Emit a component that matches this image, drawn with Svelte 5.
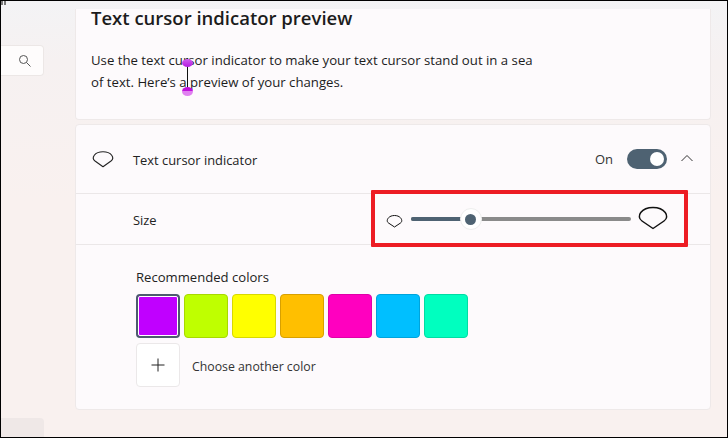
<script>
  const colors = [
    { fill: "#c000ff", edge: "#a800e0" },
    { fill: "#bfff00", edge: "#a8d800" },
    { fill: "#ffff00", edge: "#d8d800" },
    { fill: "#ffbf00", edge: "#d8a000" },
    { fill: "#ff00bf", edge: "#e000a8" },
    { fill: "#00bfff", edge: "#00a4dc" },
    { fill: "#00ffbf", edge: "#00dca4" },
  ];
</script>

<div class="window">
  <div class="grip"><i></i><i></i></div>
  <div class="body">
    <aside class="sidebar">
      <div class="search">
        <svg width="14" height="14" viewBox="0 0 14 14" fill="none" stroke="#555" stroke-width="1">
          <circle cx="5.500" cy="5.500" r="4" />
          <path d="M8.500 8.500l4 4" />
        </svg>
      </div>
      <div class="navitem"></div>
    </aside>

    <main class="content">
      <section class="card preview">
        <h1>Text cursor indicator preview</h1>
        <p>
          Use the text cursor indicator to make your text cursor stand out in a sea<br />
          of text. Here’s a preview of your changes.
        </p>
        <span class="caret">
          <i class="dot top"></i>
          <i class="dot bottom"></i>
        </span>
      </section>

      <section class="card settings">
        <div class="row head">
          <svg class="drop" width="24" height="20" viewBox="0 0 24 20" fill="none" stroke="#222" stroke-width="1.1">
            <path d="M12 17.700 L4 12 C0 9 3.500 2.800 12 2.800 C20.500 2.800 24 9 20 12 Z" stroke-linejoin="round" />
          </svg>
          <span class="label">Text cursor indicator</span>
          <span class="state">On</span>
          <span class="toggle"><i></i></span>
          <svg class="chevron" width="12" height="12" viewBox="0 0 12 12" fill="none" stroke="#333" stroke-width="1">
            <path d="M0.500 9L6 3.500L11.500 9" />
          </svg>
        </div>

        <div class="row size">
          <span class="label">Size</span>
          <div class="slider">
            <svg class="small" width="17" height="14" viewBox="0 0 17 14" fill="none" stroke="#111" stroke-width="1">
              <path d="M8.500 13 L2.500 9 C-0.500 7 2 1.500 8.500 1.500 C15 1.500 17.500 7 14.500 9 Z" stroke-linejoin="round" />
            </svg>
            <div class="track">
              <span class="filled"></span>
              <span class="thumb"><i></i></span>
            </div>
            <svg class="big" width="30" height="24" viewBox="0 0 30 24" fill="none" stroke="#111" stroke-width="1.500">
              <path d="M15 22.500 L4 15 C-2.500 10.500 3.500 1.500 15 1.500 C26.500 1.500 32.500 10.500 26 15 Z" stroke-linejoin="round" />
            </svg>
          </div>
        </div>

        <div class="colors">
          <div class="subtitle">Recommended colors</div>
          <div class="swatches">
            {#each colors as c, i}
              <span class="swatch" class:selected={i === 0} style="background:{c.fill};border-color:{i === 0 ? '#4c5b6e' : c.edge}"></span>
            {/each}
          </div>
          <div class="choose">
            <span class="plus">
              <svg width="14" height="14" viewBox="0 0 14 14" stroke="#222" stroke-width="1">
                <path d="M7 0.500V13.500M0.500 7H13.500" />
              </svg>
            </span>
            <span class="another">Choose another color</span>
          </div>
        </div>
      </section>
    </main>
  </div>

  <div class="highlight"></div>
</div>

<style>
  :global(body) {
    margin: 0;
    background: #000;
  }

  .window {
    position: relative;
    width: 728px;
    height: 438px;
    box-sizing: border-box;
    border: 1px solid #000;
    background: linear-gradient(#f3f3f5, #f6f1f1 60px, #f9f1ef 200px);
    overflow: hidden;
    font-family: "Open Sans", "Noto Sans", sans-serif;
    color: #1c1c1c;
  }

  .grip {
    position: absolute;
    left: 0;
    top: 0;
    display: flex;
    gap: 1px;
  }

  .grip i {
    width: 2px;
    height: 4px;
    background: #777;
  }

  .body {
    display: flex;
    height: 436px;
    padding-top: 8px;
    box-sizing: border-box;
  }

  .sidebar {
    width: 74px;
    flex: none;
    display: flex;
    flex-direction: column;
    padding-top: 36px;
    box-sizing: border-box;
  }

  .search {
    width: 43px;
    height: 31px;
    box-sizing: border-box;
    background: #fefcfc;
    border: 1px solid #ece7e6;
    border-left: none;
    border-radius: 0 4px 4px 0;
    display: flex;
    align-items: center;
    justify-content: flex-end;
    padding-right: 11px;
  }

  .navitem {
    width: 43px;
    height: 19px;
    margin-top: 342px;
    background: #efe8e7;
    border-radius: 0 4px 0 0;
  }

  .content {
    width: 636px;
    flex: none;
    display: flex;
    flex-direction: column;
    gap: 4px;
  }

  .card {
    background: #fdfafc;
    border: 1px solid #eee9e9;
    border-radius: 4px;
    box-sizing: border-box;
  }

  .preview {
    position: relative;
    height: 111px;
    padding: 0 15px;
    border-top: none;
    border-radius: 0 0 4px 4px;
  }

  h1 {
    margin: -1px 0 0;
    font-size: 18.500px;
    font-weight: 600;
    line-height: 20px;
  }

  p {
    margin: 21px 0 0;
    font-size: 13.200px;
    line-height: 22px;
  }

  .caret {
    position: absolute;
    left: 111px;
    top: 57px;
    width: 1px;
    height: 23px;
    background: #111;
  }

  .dot {
    position: absolute;
    left: -5px;
    width: 11px;
    height: 8px;
    border-radius: 50%;
  }

  .dot.top {
    top: -7px;
    background: linear-gradient(#d060ee, #b41ae0);
  }

  .dot.bottom {
    bottom: -7px;
    height: 9px;
    background: linear-gradient(#c010dc 45%, #e080f0 50%);
  }

  .settings {
    height: 286px;
  }

  .row {
    display: flex;
    align-items: center;
    box-sizing: border-box;
    border-bottom: 1px solid #ebe7e8;
  }

  .head {
    height: 69px;
    padding: 0 17px 0 15px;
  }

  .drop {
    margin-right: 18px;
  }

  .label {
    font-size: 12.900px;
    padding-top: 1px;
    color: #222;
  }

  .state {
    margin-left: auto;
    font-size: 13px;
    margin-right: 14px;
    color: #333;
  }

  .toggle {
    width: 40px;
    height: 20px;
    border-radius: 10px;
    background: #4e6272;
    position: relative;
    margin-right: 14px;
  }

  .toggle i {
    position: absolute;
    right: 3px;
    top: 3px;
    width: 14px;
    height: 14px;
    border-radius: 50%;
    background: #fff;
  }

  .chevron {
    margin-top: -2px;
  }

  .size {
    height: 51px;
    padding-left: 57px;
  }

  .slider {
    display: flex;
    align-items: center;
    margin-left: 229px;
    gap: 7px;
  }

  .small {
    margin-top: 3px;
    margin-right: 1px;
  }

  .big {
    margin-top: -2px;
  }

  .track {
    position: relative;
    width: 220px;
    height: 4px;
    border-radius: 2px;
    background: #8a8a8a;
  }

  .filled {
    position: absolute;
    left: 0;
    top: 0;
    height: 4px;
    width: 60px;
    border-radius: 2px;
    background: #4e6272;
  }

  .thumb {
    position: absolute;
    left: 49px;
    top: -9px;
    width: 22px;
    height: 22px;
    border-radius: 50%;
    background: #fff;
    border: 1px solid #eee;
    box-sizing: border-box;
    display: flex;
    align-items: center;
    justify-content: center;
  }

  .thumb i {
    width: 11px;
    height: 11px;
    border-radius: 50%;
    background: #4e6272;
  }

  .colors {
    padding: 23px 0 0 60px;
  }

  .subtitle {
    font-size: 13.100px;
    line-height: 18px;
    color: #222;
  }

  .swatches {
    display: flex;
    gap: 4px;
    margin-top: 8px;
  }

  .swatch {
    width: 44px;
    height: 44px;
    box-sizing: border-box;
    border: 1px solid;
    border-radius: 4px;
  }

  .swatch.selected {
    border-width: 2px;
    outline: 1px solid #fff;
    outline-offset: -3px;
  }

  .choose {
    display: flex;
    align-items: center;
    margin-top: 5px;
  }

  .plus {
    width: 44px;
    height: 44px;
    box-sizing: border-box;
    background: #fff;
    border: 1px solid #ebe8e9;
    border-radius: 4px;
    display: flex;
    align-items: center;
    justify-content: center;
  }

  .another {
    margin-left: 12px;
    padding-top: 2px;
    font-size: 12.300px;
    color: #333;
  }

  /* red annotation drawn over the slider */
  .highlight {
    position: absolute;
    left: 370px;
    top: 189px;
    width: 317px;
    height: 57px;
    box-sizing: border-box;
    border: 4px solid #ed1c24;
    border-radius: 1px;
  }
</style>
